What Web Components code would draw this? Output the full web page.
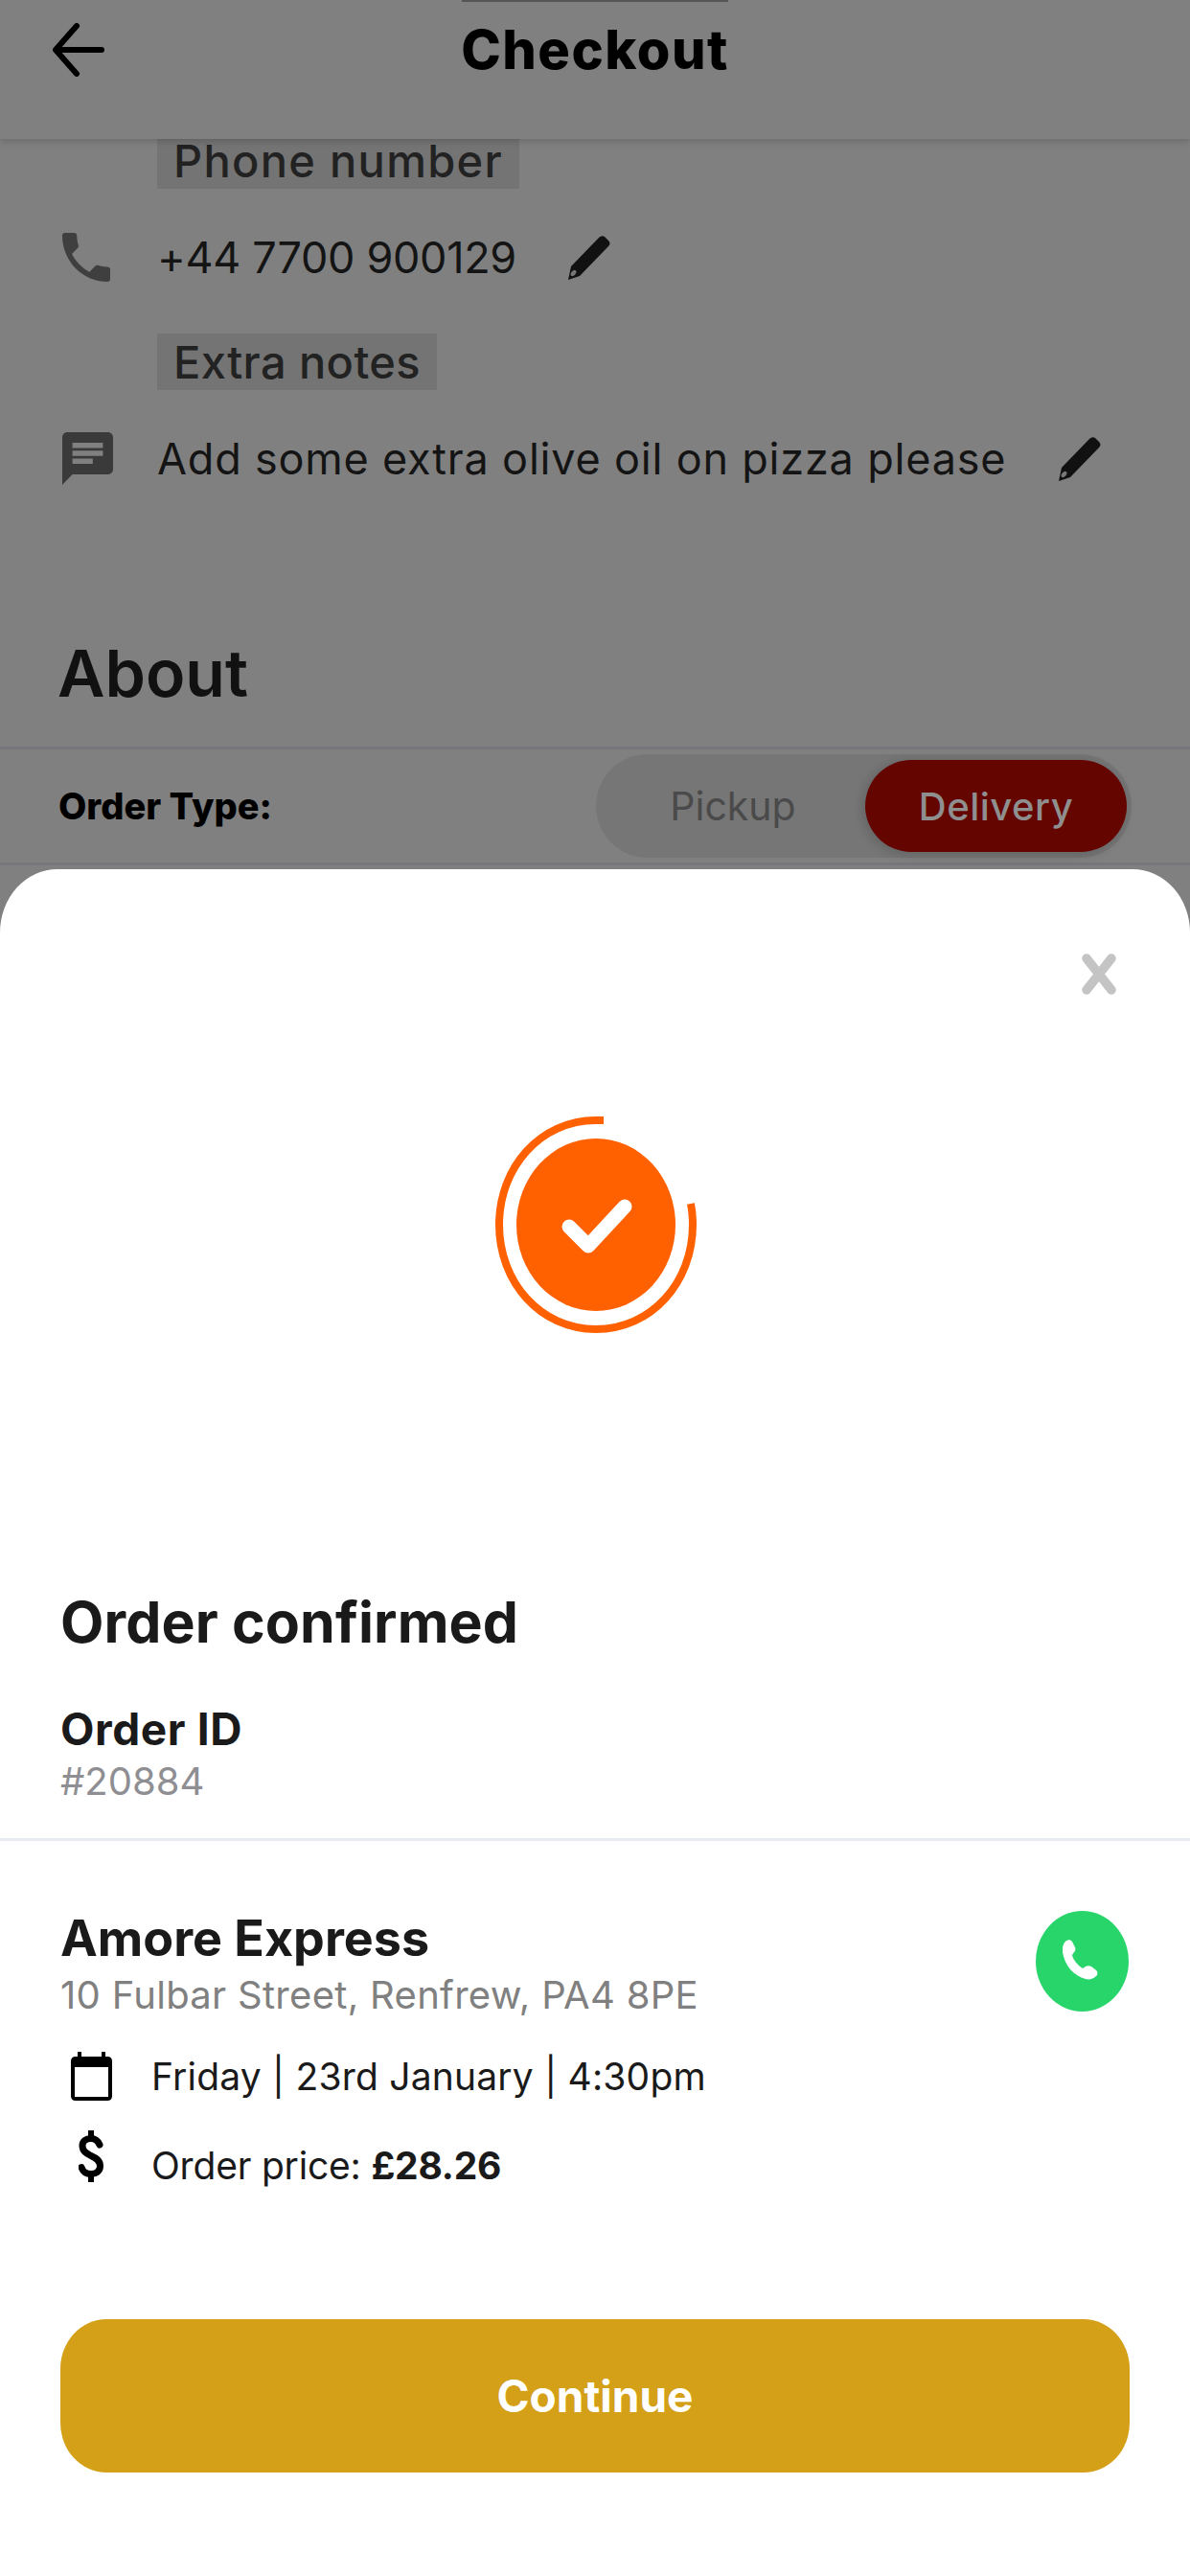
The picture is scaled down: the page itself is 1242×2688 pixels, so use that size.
<!DOCTYPE html>
<html lang="en">
<head>
<meta charset="utf-8">
<title>Checkout</title>
<style>
  html, body { margin: 0; padding: 0; }
  body { font-family: Inter, "Noto Sans", sans-serif; }
</style>
</head>
<body>
<checkout-screen>
  <app-header slot="header">Checkout</app-header>
  <field-tag style="--tag-ls:1.3px">Phone number</field-tag>
  <field-row icon="phone" style="--row-top:41px;--pencil-gap:54px;--ls:-.3px">+44 7700 900129</field-row>
  <field-tag style="--tag-top:50px;--tag-ls:.4px">Extra notes</field-tag>
  <field-row icon="note" style="--row-top:41px;--pencil-gap:55px;--ls:.8px">Add some extra olive oil on pizza please</field-row>
  <about-section></about-section>
  <order-sheet slot="sheet">
    <sheet-row icon="calendar" style="--ls:.2px;--text-top:-1px">Friday | 23rd January | 4:30pm</sheet-row>
    <sheet-row icon="dollar" style="--row-top:28px;--text-top:10px;--ls:-.2px">Order price: <b>£28.26</b></sheet-row>
  </order-sheet>
</checkout-screen>

<script>
const ICONS = {
  phone: '<svg width="50" height="51" viewBox="3 3 18 18" preserveAspectRatio="none"><path fill="#3f3f3f" d="M6.62 10.79c1.44 2.83 3.76 5.14 6.59 6.59l2.2-2.2c.27-.27.67-.36 1.02-.24 1.12.37 2.33.57 3.57.57.55 0 1 .45 1 1V20c0 .55-.45 1-1 1-9.39 0-17-7.61-17-17 0-.55.45-1 1-1h3.5c.55 0 1 .45 1 1 0 1.25.2 2.45.57 3.57.11.35.03.74-.25 1.02l-2.2 2.2z"/></svg>',
  note: '<svg width="53" height="55" viewBox="2 2 20 20" preserveAspectRatio="none"><path fill="#3a3a3a" d="M20 2H4c-1.1 0-1.99.9-1.99 2L2 22l4-4h14c1.1 0 2-.9 2-2V4c0-1.1-.9-2-2-2zM6 9h12v2H6V9zm8 5H6v-2h8v2zm4-6H6V6h12v2z"/></svg>',
  pencil: '<svg width="44" height="47" viewBox="0 0 44 47"><path fill="#111" d="M0 47 3 33 32 3q3-3 6-1l4 4q3 3 0 6L12 43Z"/><ellipse cx="5.500" cy="40" rx="2.200" ry="3.600" transform="rotate(40 5.500 40)" fill="#777"/></svg>',
  calendar: '<svg width="43" height="51" viewBox="0 0 43 51"><path fill="#000" d="M7 0h4v5h21V0h4v5h2q5 0 5 5v36q0 5-5 5H5q-5 0-5-5V10q0-5 5-5h2Zm-3 16v31h35V16Z"/></svg>',
  dollar: '<svg width="26" height="54" viewBox="0 0 26 54"><path fill="none" stroke="#000" stroke-width="6" d="M13 0v9M13 45v9"/><path fill="none" stroke="#000" stroke-width="7" stroke-linecap="round" d="M22 15C20 10.500 17 8.500 13 8.500 7.500 8.500 4 11 4 16c0 6 4.500 8 9 10.500 5.500 2.500 9.500 5 9.500 10.500 0 6-4.500 8.500-9.500 8.500-5 0-8.500-2.500-10-7"/></svg>'
};

class CheckoutScreen extends HTMLElement {
  constructor() {
    super();
    this.attachShadow({ mode: 'open' });
    this.shadowRoot.innerHTML = `
      <style>
        :host {
          display: block;
          position: relative;
          width: 1242px;
          height: 2688px;
          overflow: hidden;
          background: #808080;
          color: #141414;
        }
        .body { display: flex; flex-direction: column; padding-top: 138px; }
      </style>
      <slot name="header"></slot>
      <div class="body"><slot></slot></div>
      <slot name="sheet"></slot>
    `;
  }
}

class AppHeader extends HTMLElement {
  constructor() {
    super();
    this.attachShadow({ mode: 'open' });
    this.shadowRoot.innerHTML = `
      <style>
        :host {
          display: block;
          position: absolute;
          top: 0; left: 0; right: 0;
          height: 145px;
          z-index: 2;
          background: #808080;
          box-shadow: 0 3px 7px rgba(0,0,0,.16);
        }
        .notch { width: 278px; height: 2px; margin: 0 auto; background: #555; }
        .bar {
          display: grid;
          grid-template-columns: 1fr auto 1fr;
          align-items: center;
          height: 100px;
          padding-left: 55px;
          padding-right: 55px;
        }
        svg { display: block; }
        h1 {
          margin: 0;
          font-size: 56px;
          line-height: 100px;
          font-weight: 800;
          color: #000;
          letter-spacing: 1.5px;
        }
      </style>
      <div class="notch"></div>
      <div class="bar">
        <svg width="54" height="56" viewBox="0 0 54 56"><path fill="none" stroke="#000" stroke-width="6" stroke-linecap="round" stroke-linejoin="round" d="M51 28H4M25 3 3 28l22 25"/></svg>
        <h1><slot></slot></h1>
      </div>
    `;
  }
}

class FieldTag extends HTMLElement {
  constructor() {
    super();
    this.attachShadow({ mode: 'open' });
    this.shadowRoot.innerHTML = `
      <style>
        :host {
          display: block;
          align-self: flex-start;
          margin: var(--tag-top, 0) 0 0 164px;
          padding: 0 17px;
          height: 59px;
          background: #747474;
          color: #222;
          font-size: 47px;
          font-weight: 500;
          line-height: 59px;
          letter-spacing: var(--tag-ls, .3px);
          white-space: nowrap;
        }
      </style>
      <slot></slot>
    `;
  }
}

class FieldRow extends HTMLElement {
  constructor() {
    super();
    this.attachShadow({ mode: 'open' });
    this.shadowRoot.innerHTML = `
      <style>
        :host {
          display: flex;
          align-items: center;
          height: 60px;
          margin-top: var(--row-top, 0);
          font-size: 45px;
          color: #141414;
          letter-spacing: var(--ls, 0);
          white-space: nowrap;
        }
        .icon { width: 164px; padding-left: 65px; box-sizing: border-box; display: flex; }
        .pencil { display: flex; margin-left: var(--pencil-gap, 54px); }
        svg { display: block; }
      </style>
      <span class="icon">${ICONS[this.getAttribute('icon')]}</span>
      <span><slot></slot></span>
      <span class="pencil">${ICONS.pencil}</span>
    `;
  }
}

class AboutSection extends HTMLElement {
  constructor() {
    super();
    this.attachShadow({ mode: 'open' });
    this.shadowRoot.innerHTML = `
      <style>
        :host { display: block; margin-top: 154px; }
        h2 {
          margin: 0 0 37px 60px;
          font-size: 68px;
          line-height: 80px;
          font-weight: 600;
          color: #111;
        }
        .row {
          display: flex;
          align-items: center;
          justify-content: space-between;
          box-sizing: border-box;
          height: 124px;
          padding: 0 61px 0 61px;
          border-top: 3px solid #75757a;
          border-bottom: 3px solid #75757a;
        }
        .label { font-size: 38px; font-weight: 800; color: #000; }
        .toggle {
          display: flex;
          box-sizing: border-box;
          width: 559px;
          height: 108px;
          padding: 6px 5px;
          border-radius: 54px;
          background: #767676;
          font-size: 41px;
        }
        .opt { display: flex; align-items: center; justify-content: center; border-radius: 48px; }
        .pickup { flex: 1; color: #4a4a4a; }
        .delivery {
          width: 273px;
          background: #640500;
          color: #8f8f8f;
          font-size: 40px;
          font-weight: 500;
          letter-spacing: .5px;
          box-shadow: -2px 2px 10px 3px rgba(0,0,0,.12);
        }
      </style>
      <h2>About</h2>
      <div class="row">
        <span class="label">Order Type:</span>
        <div class="toggle">
          <span class="opt pickup">Pickup</span>
          <span class="opt delivery">Delivery</span>
        </div>
      </div>
    `;
  }
}

class OrderSheet extends HTMLElement {
  constructor() {
    super();
    this.attachShadow({ mode: 'open' });
    this.shadowRoot.innerHTML = `
      <style>
        :host {
          display: block;
          position: absolute;
          left: 0; right: 0; top: 907px; bottom: 0;
          z-index: 3;
          background: #fff;
          border-radius: 60px 60px 0 0 / 66px 66px 0 0;
          color: #1a1a1a;
        }
        svg { display: block; }
        .close { display: flex; justify-content: flex-end; padding: 88px 77px 0 0; }
        .badge { display: flex; justify-content: center; margin-top: 127px; padding-left: 1px; }
        .head { padding: 0 63px; }
        h3 { margin: 267px 0 0; font-size: 59px; line-height: 70px; font-weight: 700; letter-spacing: .1px; }
        .id-label { margin-top: 50px; font-size: 46px; line-height: 52px; font-weight: 700; letter-spacing: .6px; }
        .id { margin-top: 6px; font-size: 40px; line-height: 46px; color: #8e8e93; }
        hr { margin: 36px 0 0; height: 3px; border: 0; background: #e8ebf2; }
        .store { display: flex; justify-content: space-between; align-items: flex-start; padding: 73px 64px 0 63px; }
        .name { margin-top: -1px; font-size: 52px; line-height: 60px; font-weight: 700; }
        .addr { margin-top: 6px; font-size: 40px; line-height: 46px; color: #808080; letter-spacing: .3px; }
        .rows { padding-left: 64px; margin-top: 36px; }
        .cta {
          display: flex;
          align-items: center;
          justify-content: center;
          box-sizing: border-box;
          width: 1116px;
          height: 160px;
          margin: 143px 0 0 63px;
          border: 0;
          border-radius: 48px / 52px;
          background: #d4a017;
          color: #fff;
          font: 700 46px Inter, "Noto Sans", sans-serif;
        }
      </style>
      <div class="close">
        <svg width="36" height="43" viewBox="0 0 36 43"><path fill="none" stroke="#c4c4c4" stroke-width="9.500" stroke-linecap="round" d="M5 5l26 33M31 5 5 38"/></svg>
      </div>
      <div class="badge">
        <svg width="210" height="226" viewBox="0 0 210 226">
          <ellipse cx="105" cy="113" rx="83" ry="90" fill="#ff6000"/>
          <path fill="none" stroke="#ff6000" stroke-width="8" d="M113 4C109 4 107 4 105 4 47 4 4 53 4 113s43 109 101 109 101-49 101-109c0-7-.5-14-2-22"/>
          <path fill="none" stroke="#fff" stroke-width="15" stroke-linecap="round" stroke-linejoin="round" d="M77 115 97 135 135 94"/>
        </svg>
      </div>
      <div class="head">
        <h3>Order confirmed</h3>
        <div class="id-label">Order ID</div>
        <div class="id">#20884</div>
      </div>
      <hr>
      <div class="store">
        <div>
          <div class="name">Amore Express</div>
          <div class="addr">10 Fulbar Street, Renfrew, PA4 8PE</div>
        </div>
        <svg width="97" height="105" viewBox="0 0 97 105">
          <ellipse cx="48.500" cy="52.500" rx="48.500" ry="52.500" fill="#27d56b"/>
          <path fill="#fff" d="M30 33c2-3 6-4 8-1l3 6c1 2 0 4-1 5l-2 3c1 5 6 11 11 14l3-2c2-1 4-1 6 0l4 3c3 2 3 5 1 7-3 3-7 4-11 3-12-3-22-14-24-28 0-4 0-7 2-10z"/>
        </svg>
      </div>
      <div class="rows"><slot></slot></div>
      <button class="cta">Continue</button>
    `;
  }
}

class SheetRow extends HTMLElement {
  constructor() {
    super();
    this.attachShadow({ mode: 'open' });
    this.shadowRoot.innerHTML = `
      <style>
        :host {
          display: flex;
          align-items: flex-start;
          height: 54px;
          margin-top: var(--row-top, 0);
          font-size: 39px;
          line-height: 54px;
          color: #1a1a1a;
          letter-spacing: var(--ls, 0);
          white-space: nowrap;
        }
        .icon { display: flex; justify-content: center; width: 62px; margin-right: 32px; }
        .text { margin-top: var(--text-top, 0); }
        svg { display: block; }
        ::slotted(b) { font-weight: 700; }
      </style>
      <span class="icon">${ICONS[this.getAttribute('icon')]}</span>
      <span class="text"><slot></slot></span>
    `;
  }
}

customElements.define('checkout-screen', CheckoutScreen);
customElements.define('app-header', AppHeader);
customElements.define('field-tag', FieldTag);
customElements.define('field-row', FieldRow);
customElements.define('about-section', AboutSection);
customElements.define('order-sheet', OrderSheet);
customElements.define('sheet-row', SheetRow);
</script>
</body>
</html>
